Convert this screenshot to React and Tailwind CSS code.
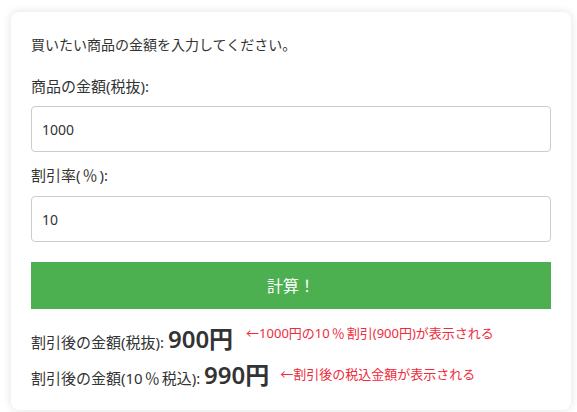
import { useState } from 'react';

const font = { fontFamily: '"Noto Sans", "Noto Sans CJK JP", sans-serif' };

const Pct = () => <span className="mx-[2px] font-['Noto_Sans_CJK_JP']">％</span>;

const App = () => {
    const [price, setPrice] = useState('1000');
    const [rate, setRate] = useState('10');

    return (
        <div className="min-h-[412px] bg-white pt-[12px] pl-[11px] text-[#333]" style={font}>
            <div className="w-[560px] rounded-lg bg-white px-5 pt-[21px] pb-[19px] shadow-[0_0_10px_rgba(0,0,0,0.12)]">
                {/* Intro */}
                <p className="h-6 text-[14px] leading-6">買いたい商品の金額を入力してください。</p>

                {/* Price */}
                <label className="mt-[17px] block h-6 text-[15px] leading-6">商品の金額(税抜):</label>
                <input
                    type="text"
                    value={price}
                    onChange={(e) => setPrice(e.target.value)}
                    className="mt-2 block h-[46px] w-full rounded border border-[#ccc] px-[10px] text-[14px] outline-none"
                />

                {/* Rate */}
                <label className="mt-[11px] block h-6 text-[15px] leading-6">割引率(<Pct />):</label>
                <input
                    type="text"
                    value={rate}
                    onChange={(e) => setRate(e.target.value)}
                    className="mt-[9px] block h-[46px] w-full rounded border border-[#ccc] px-[10px] text-[14px] outline-none"
                />

                <button className="mt-5 block h-[47px] w-full bg-[#4caf50] text-[16px] text-white">計算！</button>

                {/* Results */}
                <div className="mt-[14px] flex h-8 items-baseline text-[15px]">
                    <span>割引後の金額(税抜):&nbsp;</span>
                    <span className="text-[24px] font-semibold leading-8">900円</span>
                    <span className="relative -top-[10px] ml-[13px] text-[13px] text-[#ef2b3b]">←1000円の10<Pct />割引(900円)が表示される</span>
                </div>
                <div className="mt-1 flex h-8 items-baseline text-[15px]">
                    <span>割引後の金額(10<Pct />税込):&nbsp;</span>
                    <span className="text-[24px] font-semibold leading-8">990円</span>
                    <span className="relative -top-[5px] ml-[11px] text-[13px] text-[#ef2b3b]">←割引後の税込金額が表示される</span>
                </div>
            </div>
        </div>
    );
};

export default App;
